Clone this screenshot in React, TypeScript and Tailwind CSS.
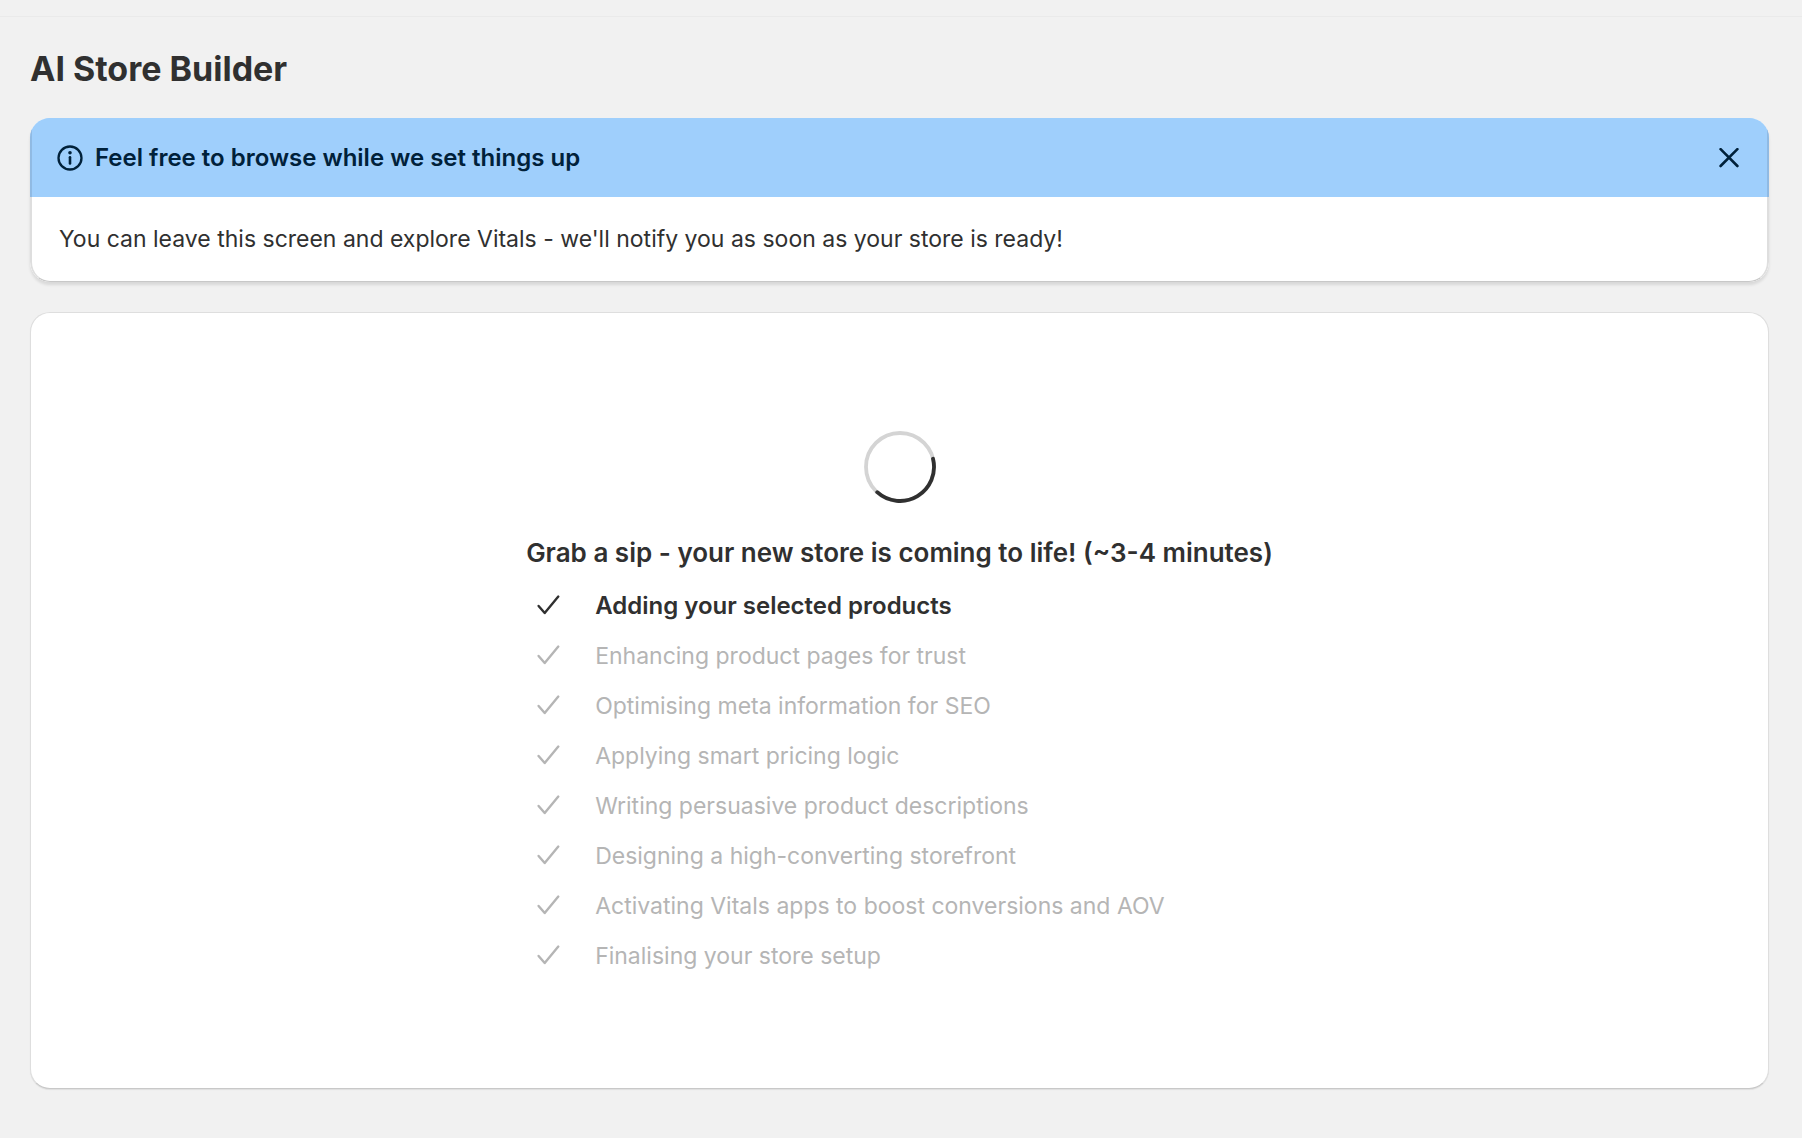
import { useState } from "react";
import clsx from "clsx";

interface Step {
    label: string;
    active?: boolean;
}

const STEPS: Step[] = [
    { label: "Adding your selected products", active: true },
    { label: "Enhancing product pages for trust" },
    { label: "Optimising meta information for SEO" },
    { label: "Applying smart pricing logic" },
    { label: "Writing persuasive product descriptions" },
    { label: "Designing a high-converting storefront" },
    { label: "Activating Vitals apps to boost conversions and AOV" },
    { label: "Finalising your store setup" },
];

function InfoIcon() {
    return (
        <svg viewBox="0 0 26 26" className="size-[26px] shrink-0" fill="none" stroke="currentColor" strokeWidth="2.3" aria-hidden="true">
            <circle cx="13" cy="13" r="11.5" />
            <path d="M13 12.2v6.2" strokeWidth="2.6" strokeLinecap="round" />
            <circle cx="13" cy="7.8" r="1.8" fill="currentColor" stroke="none" />
        </svg>
    );
}

function CloseIcon() {
    return (
        <svg viewBox="0 0 20 20" className="size-5" fill="none" stroke="currentColor" strokeWidth="2.6" strokeLinecap="round" aria-hidden="true">
            <path d="M1.6 1.2l16.8 16.8M18.4 1.2l-16.8 16.8" />
        </svg>
    );
}

function CheckIcon() {
    return (
        <svg viewBox="0 0 24 24" className="size-6 shrink-0" fill="none" stroke="currentColor" strokeWidth="2.4" strokeLinecap="round" strokeLinejoin="round" aria-hidden="true">
            <path d="M2.6 12l6.1 7L22.3 2.6" />
        </svg>
    );
}

// Progress ring, with the dark arc over a light track
function Spinner() {
    return (
        <svg viewBox="0 0 72 72" className="size-[72px]" fill="none" strokeWidth="3.8" role="img" aria-label="Loading">
            <circle cx="36" cy="36" r="34" stroke="#d4d4d4" />
            <path d="M69 27.8A34 34 0 0 1 13.2 61.2" stroke="#303030" strokeLinecap="round" />
        </svg>
    );
}

function Banner({ onClose }: { onClose: () => void }) {
    return (
        <section className="mb-[30px] overflow-hidden rounded-[20px] bg-white shadow-[0_3px_3px_rgba(0,0,0,0.1)]">
            <div className="flex items-center gap-3 border-x-2 border-t border-x-[#90bae3] border-t-[#9fcffc] bg-[#9fcffc] px-[25px] py-6 text-[#00213a]">
                <InfoIcon />
                <h2 className="flex-1 text-2xl leading-[30px] font-semibold">Feel free to browse while we set things up</h2>
                <button type="button" aria-label="Close" className="mr-[3px]" onClick={onClose}>
                    <CloseIcon />
                </button>
            </div>
            <p className="rounded-b-[20px] border-x-2 border-b border-x-[#dedede] border-b-[#c8c8c8] px-[27px] py-6 text-[23px] leading-9">
                You can leave this screen and explore Vitals - we'll notify you as soon as your store is ready!
            </p>
        </section>
    );
}

function StepItem({ step }: { step: Step }) {
    return (
        <li className={clsx("flex items-center gap-[35px] py-[7px] pl-2.5 leading-9", step.active ? "text-2xl/9 font-semibold" : "text-[23px] text-[#b5b5b5]")}>
            <CheckIcon />
            {step.label}
        </li>
    );
}

export default function App() {
    const [bannerOpen, setBannerOpen] = useState(true);

    return (
        <div className="min-h-screen bg-[#f1f1f1] pt-4 font-['Inter',sans-serif] text-[#303030]">
            <main className="border-t border-[#eaeaea] pt-8 pr-[33px] pb-12 pl-[30px]">
                <h1 className="mb-[29px] text-[34px] leading-10 font-bold">AI Store Builder</h1>
                {bannerOpen && <Banner onClose={() => setBannerOpen(false)} />}

                {/* Setup progress */}
                <section className="flex flex-col items-center rounded-[20px] border border-[#dedede] border-b-[#c8c8c8] bg-white pt-[118px] pb-[107px] shadow-[0_1px_1px_rgba(0,0,0,0.08)]">
                    <Spinner />
                    <div className="mt-8">
                        <h2 className="mb-2.5 text-[26px] leading-9 font-semibold">
                            Grab a sip - your new store is coming to life! (~3-4 minutes)
                        </h2>
                        <ul>
                            {STEPS.map((step) => (
                                <StepItem key={step.label} step={step} />
                            ))}
                        </ul>
                    </div>
                </section>
            </main>
        </div>
    );
}
